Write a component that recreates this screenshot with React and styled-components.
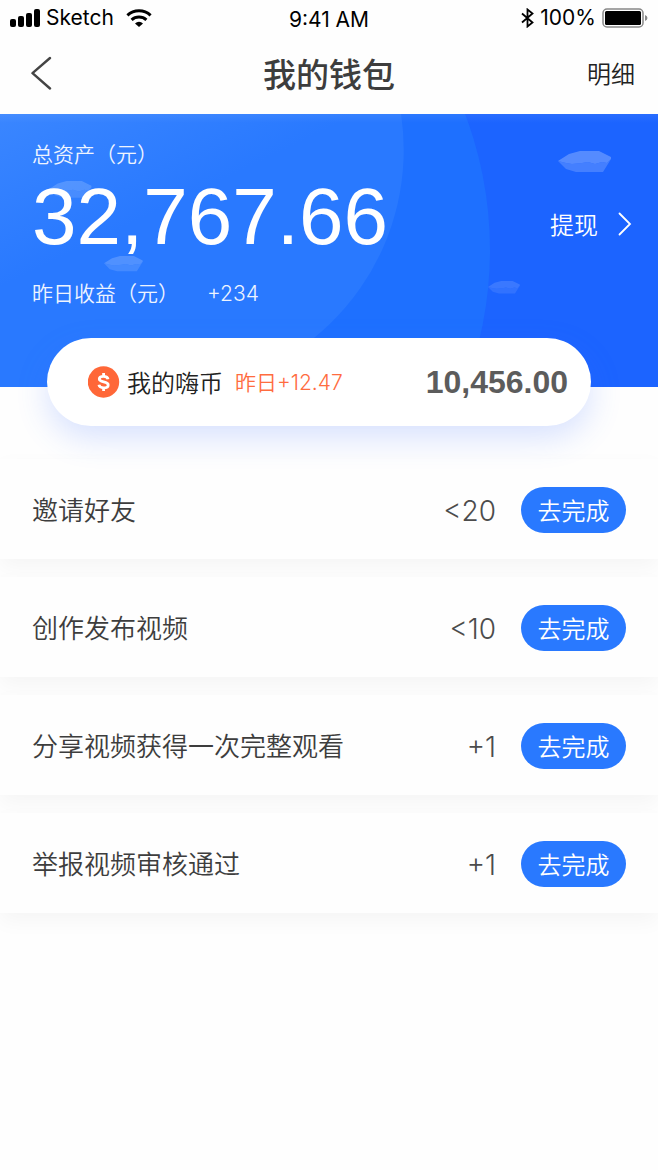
import React from "react";
import styled, { createGlobalStyle } from "styled-components";

const GlobalStyle = createGlobalStyle`
  * { box-sizing: border-box; }
  body {
    margin: 0;
    background: #fefefe;
    color: #3d3d3d;
    font-family: "Noto Sans CJK SC", sans-serif;
    font-weight: 350;
  }
  button, a {
    font: inherit;
    color: inherit;
    text-decoration: none;
  }
  button {
    border: 0;
    padding: 0;
    background: none;
    cursor: pointer;
  }
  svg { display: block; flex: none; }
`;

const Page = styled.main`
  display: flex;
  flex-direction: column;
  min-height: 100vh;
`;

const StatusBar = styled.div`
  display: grid;
  grid-template-columns: 1fr auto 1fr;
  align-items: center;
  height: 36px;
  padding: 0 10px;
  font-family: Inter, sans-serif;
  font-size: 21px;
  font-weight: 400;
  line-height: 24px;
  color: #000;
`;

const StatusGroup = styled.div`
  display: flex;
  align-items: center;
  gap: ${({ $gap }) => $gap}px;
  justify-content: ${({ $end }) => ($end ? "flex-end" : "flex-start")};
`;

const Clock = styled.span`
  padding-top: 4px;
`;

const NavBar = styled.header`
  display: grid;
  grid-template-columns: 1fr auto 1fr;
  align-items: center;
  height: 78px;
  padding: 0 23px 4px;
`;

const BackButton = styled.button`
  justify-self: start;
  padding: 0 7px;
`;

const Title = styled.h1`
  margin: 0;
  font-size: 33px;
  font-weight: 500;
  line-height: 40px;
`;

const DetailLink = styled.a`
  justify-self: end;
  font-size: 24px;
  line-height: 36px;
  color: #222;
`;

const Hero = styled.section`
  position: relative;
  height: 273px;
  padding: 23px 26px 0 32px;
  background: #1c64ff;
  color: #fff;
`;

const HeroArt = styled.svg`
  position: absolute;
  inset: 0;
  width: 100%;
  height: 100%;
`;

const HeroBody = styled.div`
  position: relative;
  display: flex;
  align-items: center;
  justify-content: space-between;
`;

const Assets = styled.div`
  display: flex;
  flex-direction: column;
`;

const Caption = styled.div`
  display: flex;
  align-items: baseline;
  gap: 28px;
  font-size: 21px;
  line-height: 32px;
  color: #eef4ff;
`;

const Digits = styled.span`
  font-family: Inter, sans-serif;
  font-weight: 300;
`;

const Total = styled.div`
  padding-bottom: 11px;
  font-family: "Liberation Sans", sans-serif;
  font-size: 80px;
  font-weight: 400;
  line-height: 96px;
`;

const Withdraw = styled.a`
  display: flex;
  align-items: center;
  gap: 20px;
  font-size: 24px;
  line-height: 36px;
`;

const CoinCard = styled.section`
  position: relative;
  display: flex;
  align-items: center;
  height: 88px;
  margin: -49px 67px 0 47px;
  padding: 0 23px 0 41px;
  border-radius: 44px;
  background: #fff;
  box-shadow: 0 12px 32px rgba(60, 110, 255, 0.2);
`;

const CoinName = styled.span`
  margin-left: 7px;
  font-size: 24px;
  line-height: 36px;
  color: #222;
`;

const CoinGain = styled.span`
  margin-left: 12px;
  font-size: 21px;
  line-height: 32px;
  color: #ff6c3f;
`;

const CoinTotal = styled.strong`
  margin-left: auto;
  font-family: "Liberation Sans", sans-serif;
  font-size: 32px;
  font-weight: 700;
  line-height: 40px;
  color: #5c5c5c;
`;

const TaskList = styled.ul`
  display: flex;
  flex-direction: column;
  gap: 18px;
  margin: 33px 0 0;
  padding: 0;
  list-style: none;
`;

const TaskRow = styled.li`
  display: flex;
  align-items: center;
  height: 100px;
  padding: 2px 32px 0;
  background: #fefefe;
  box-shadow: 0 8px 20px rgba(0, 0, 0, 0.04);
`;

const TaskName = styled.span`
  flex: 1;
  padding-bottom: 2px;
  font-size: 26px;
  line-height: 40px;
`;

const Reward = styled.span`
  margin-right: 25px;
  padding-top: 2px;
  font-family: Inter, sans-serif;
  font-size: 28px;
  font-weight: 300;
  line-height: 40px;
  color: #4c4c4c;
`;

const GoButton = styled.button`
  width: 105px;
  height: 46px;
  border-radius: 23px;
  background: #2979ff;
  color: #fff;
  font-size: 24px;
  line-height: 36px;
`;

const tasks = [
  { name: "邀请好友", reward: "<20" },
  { name: "创作发布视频", reward: "<10" },
  { name: "分享视频获得一次完整观看", reward: "+1" },
  { name: "举报视频审核通过", reward: "+1" },
];

const Signal = () => (
  <svg width="30" height="18" viewBox="0 0 30 18">
    <rect x="0" y="10" width="6" height="8" rx="2" />
    <rect x="8" y="7" width="6" height="11" rx="2" />
    <rect x="16" y="4" width="6" height="14" rx="2" />
    <rect x="24" y="0" width="6" height="18" rx="2" />
  </svg>
);

const Wifi = () => (
  <svg width="26" height="18" viewBox="0 0 26 18" fill="none" stroke="#000" strokeWidth="3">
    <path d="M1.4 6.4A17 17 0 0 1 24.6 6.4" />
    <path d="M5.6 10.8A11 11 0 0 1 20.4 10.8" />
    <path d="M9 14.4A6 6 0 0 1 17 14.4L13 18Z" fill="#000" stroke="none" />
  </svg>
);

const Bluetooth = () => (
  <svg width="13" height="20" viewBox="0 0 13 20" fill="none" stroke="#000" strokeWidth="1.8">
    <path d="M1 5.5L11.5 14.5L6.5 18.5V1.5L11.5 5.5L1 14.5" />
  </svg>
);

const Battery = () => (
  <svg width="46" height="20" viewBox="0 0 46 20">
    <rect x="1" y="1" width="40" height="18" rx="4" fill="none" stroke="#888" strokeWidth="1.5" />
    <rect x="3" y="3" width="36" height="14" rx="1.5" />
    <path d="M43 7Q45.500 8 45.500 10T43 13Z" fill="#888" />
  </svg>
);

const BackIcon = () => (
  <svg width="22" height="34" viewBox="0 0 22 34" fill="none" stroke="#444" strokeWidth="2.4" strokeLinecap="round" strokeLinejoin="round">
    <path d="M20 2L2.500 17.200L20 32.500" />
  </svg>
);

const ArrowIcon = () => (
  <svg width="14" height="24" viewBox="0 0 14 24" fill="none" stroke="#fff" strokeWidth="1.8" strokeLinecap="round">
    <path d="M1.500 1.500L12 12L1.500 22.500" />
  </svg>
);

const CoinIcon = () => (
  <svg width="32" height="32" viewBox="0 0 32 32" fill="none">
    <circle cx="15.500" cy="16" r="15.700" fill="#ff6738" />
    <path
      d="M20 13.200C19.700 11.200 18 10.400 15.600 10.400C13 10.400 11.300 11.400 11.300 13.100C11.300 17 20.200 14.900 20.200 18.900C20.200 20.800 18.400 21.800 15.600 21.800C13 21.800 11.300 20.800 10.900 18.800M15.600 7V10.500M15.600 22V25"
      stroke="#fff"
      strokeWidth="2.800"
    />
  </svg>
);

const Lips = ({ x, y, scale, opacity }) => (
  <g transform={`translate(${x} ${y}) scale(${scale})`} fill="#fff" opacity={opacity}>
    <path opacity="0.7" d="M0 10L8 12L14 13L24 12L30 11L37 13L44 11L49 12L53 8L45 21H18L8 18Z" />
    <path d="M0 10L11 3L22 0H41L53 6V8L49 12L44 11L37 13L30 11L24 12L14 13L8 12Z" />
  </g>
);

const HeroBackground = () => (
  <HeroArt viewBox="0 0 658 273" preserveAspectRatio="xMinYMid slice" aria-hidden="true">
    <defs>
      <linearGradient id="glow" x1="0" y1="0" x2="0.5" y2="0.7">
        <stop offset="0" stopColor="#3a86ff" />
        <stop offset="0.6" stopColor="#2979ff" />
      </linearGradient>
      <linearGradient id="edge" x1="0" y1="0" x2="0" y2="1">
        <stop offset="0" stopColor="#fff" stopOpacity="0.06" />
        <stop offset="1" stopColor="#fff" stopOpacity="0" />
      </linearGradient>
    </defs>
    <circle cx="106" cy="136" r="384" fill="#1e70ff" />
    <path d="M0 0H401A242 242 0 0 1 210 273H0Z" fill="url(#glow)" />
    <rect width="658" height="9" fill="url(#edge)" />
    <Lips x={558} y={37} scale={1} opacity={0.25} />
    <Lips x={49} y={67} scale={0.8} opacity={0.17} />
    <Lips x={104} y={142} scale={0.73} opacity={0.18} />
    <Lips x={488} y={167} scale={0.6} opacity={0.13} />
  </HeroArt>
);

export default function App() {
  return (
    <Page>
      <GlobalStyle />
      <StatusBar>
        <StatusGroup $gap={12}>
          <StatusGroup $gap={6}>
            <Signal />
            <span>Sketch</span>
          </StatusGroup>
          <Wifi />
        </StatusGroup>
        <Clock>9:41 AM</Clock>
        <StatusGroup $gap={6} $end>
          <Bluetooth />
          <span>100%</span>
          <Battery />
        </StatusGroup>
      </StatusBar>
      <NavBar>
        <BackButton type="button" aria-label="返回">
          <BackIcon />
        </BackButton>
        <Title>我的钱包</Title>
        <DetailLink href="#detail">明细</DetailLink>
      </NavBar>
      <Hero>
        <HeroBackground />
        <HeroBody>
          <Assets>
            <Caption>总资产（元）</Caption>
            <Total>32,767.66</Total>
            <Caption>
              <span>昨日收益（元）</span>
              <Digits>+234</Digits>
            </Caption>
          </Assets>
          <Withdraw href="#withdraw">
            提现
            <ArrowIcon />
          </Withdraw>
        </HeroBody>
      </Hero>
      <CoinCard>
        <CoinIcon />
        <CoinName>我的嗨币</CoinName>
        <CoinGain>
          昨日<Digits>+12.47</Digits>
        </CoinGain>
        <CoinTotal>10,456.00</CoinTotal>
      </CoinCard>
      <TaskList>
        {tasks.map((task) => (
          <TaskRow key={task.name}>
            <TaskName>{task.name}</TaskName>
            <Reward>{task.reward}</Reward>
            <GoButton type="button">去完成</GoButton>
          </TaskRow>
        ))}
      </TaskList>
    </Page>
  );
}
